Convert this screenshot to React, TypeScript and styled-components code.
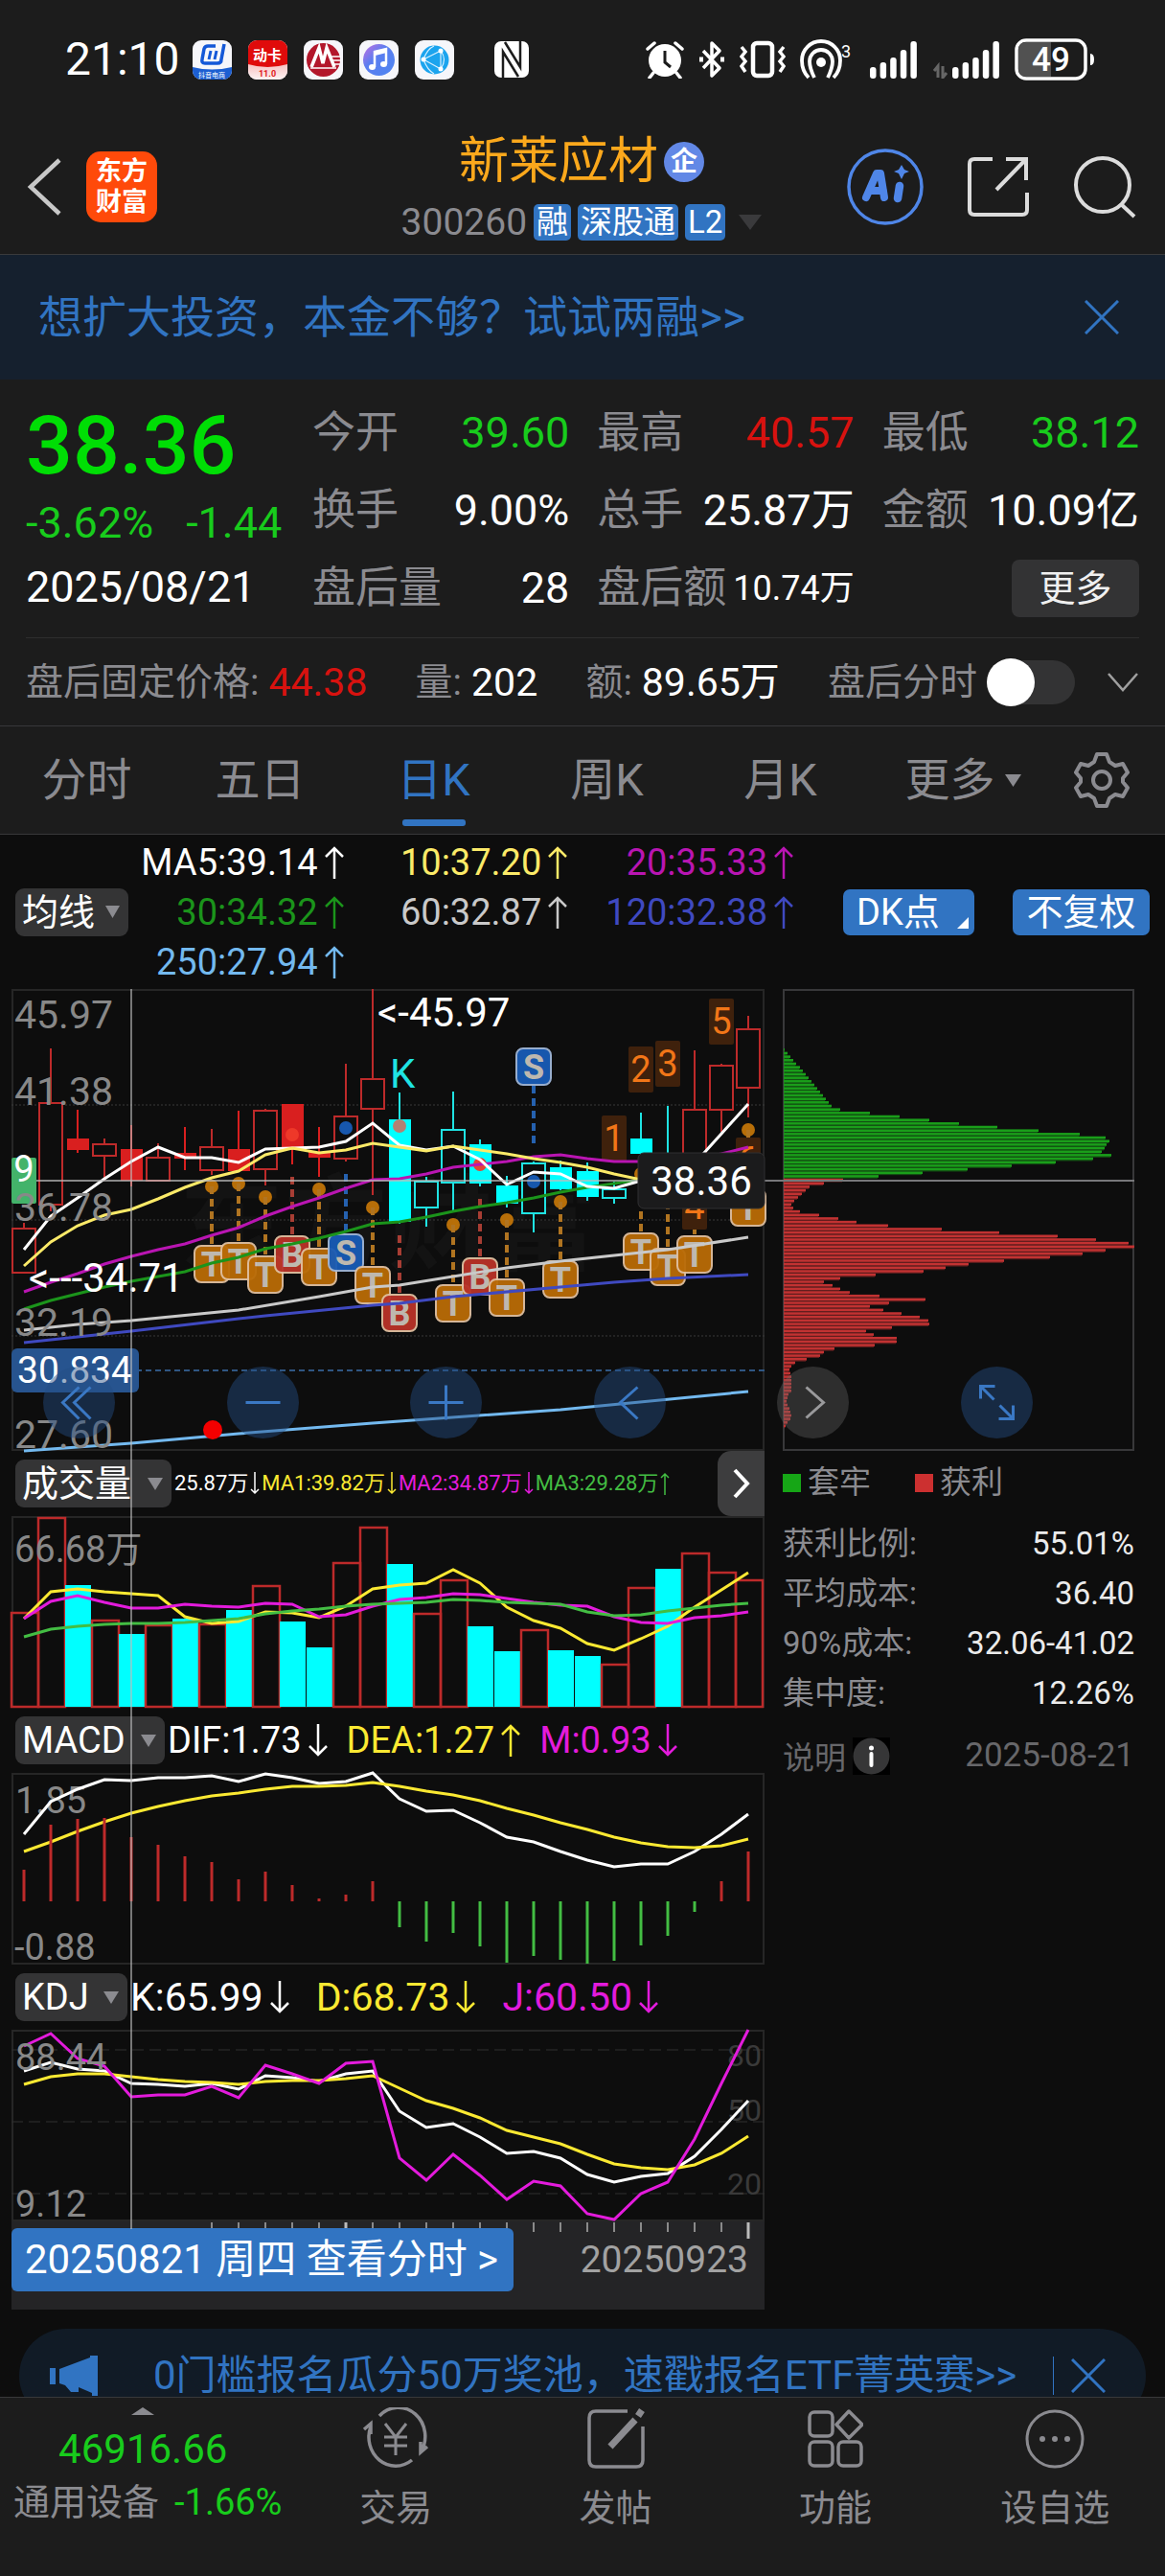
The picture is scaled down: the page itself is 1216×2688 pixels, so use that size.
import React from "react";
import styled, { createGlobalStyle, css } from "styled-components";

const c = {
  bar: "#1c1c1c",
  body: "#0d0d0d",
  line: "#2e2e2e",
  label: "#8b8b90",
  text: "#ffffff",
  up: "#d8120f",
  down: "#18cc1c",
  blue: "#3174c2",
  magenta: "#e31bdc",
  yellow: "#fbe932",
};

const GlobalStyle = createGlobalStyle`
  *, *::before, *::after { box-sizing: border-box; }
  body {
    margin: 0;
    background: ${c.body};
    color: ${c.text};
    font-family: Roboto, "Liberation Sans", "Noto Sans CJK SC", sans-serif;
  }
  button, select, input { font-family: inherit; }
  svg { display: block; flex-shrink: 0; }
`;

const plainButton = css`
  appearance: none;
  border: 0;
  padding: 0;
  margin: 0;
  background: none;
  color: inherit;
  cursor: pointer;
`;

const Page = styled.div`
  display: flex;
  flex-direction: column;
  min-width: 1100px;
`;

/* ---------- status bar ---------- */

const StatusBar = styled.div`
  display: flex;
  align-items: center;
  justify-content: space-between;
  height: 124px;
  padding: 0 72px 0 68px;
  background: ${c.bar};
`;
const StatusGroup = styled.div<{ $gap: number }>`
  display: flex;
  align-items: center;
  gap: ${(p) => p.$gap}px;
`;
const StatusSpacer = styled.span`
  width: 8px;
`;
const Clock = styled.time`
  font-size: 48px;
  line-height: 56px;
  width: 116px;
  white-space: nowrap;
`;

/* ---------- header ---------- */

const Header = styled.header`
  display: grid;
  grid-template-columns: 1fr auto 1fr;
  align-items: center;
  height: 142px;
  padding: 0 30px 0 28px;
  background: ${c.bar};
  border-bottom: 1px solid #3a3a3c;
`;
const HeaderLeft = styled.div`
  display: flex;
  align-items: center;
  gap: 26px;
`;
const HeaderRight = styled.div`
  display: flex;
  align-items: center;
  justify-content: flex-end;
  gap: 46px;
`;
const IconButton = styled.button`
  ${plainButton}
  display: block;
`;
const Brand = styled.div`
  display: grid;
  place-content: center;
  width: 74px;
  height: 74px;
  border-radius: 15px;
  background: #ff4a0a;
  font-size: 27px;
  line-height: 32px;
  font-weight: 700;
  text-align: center;
`;
const TitleBlock = styled.div`
  display: flex;
  flex-direction: column;
  align-items: center;
  gap: 14px;
`;
const TitleRow = styled.div`
  display: flex;
  align-items: center;
  gap: 6px;
`;
const StockName = styled.h1`
  margin: 0;
  font-size: 52px;
  line-height: 60px;
  font-weight: 400;
  color: #fba81c;
`;
const CompanyDot = styled.span`
  display: grid;
  place-content: center;
  width: 42px;
  height: 42px;
  border-radius: 50%;
  background: #6288e6;
  font-size: 28px;
  line-height: 32px;
  font-weight: 700;
`;
const CodeRow = styled.div`
  display: flex;
  align-items: center;
  gap: 7px;
`;
const Code = styled.span`
  font-size: 39px;
  line-height: 38px;
  color: ${c.label};
`;
const Tag = styled.span`
  padding: 0 3px;
  border-radius: 5px;
  background: ${c.blue};
  font-size: 33px;
  line-height: 38px;
`;

/* ---------- promo strip ---------- */

const Promo = styled.div`
  display: flex;
  align-items: center;
  justify-content: space-between;
  height: 130px;
  padding: 0 48px 0 40px;
  background: #15202e;
`;
const PromoLink = styled.a`
  color: ${c.blue};
  font-size: 46px;
  line-height: 60px;
  text-decoration: none;
`;

/* ---------- quote ---------- */

const Quote = styled.section`
  display: grid;
  grid-template-columns: 270px repeat(3, minmax(0, 1fr));
  column-gap: 29px;
  margin: 0;
  padding: 13px 27px 11px;
  background: ${c.bar};
`;
const QuoteMain = styled.div`
  display: grid;
  grid-template-rows: 112px 50px 83px;
  align-items: center;
  white-space: nowrap;
`;
const Price = styled.div`
  font-size: 86px;
  line-height: 100px;
  font-weight: 500;
  color: #00de05;
`;
const Change = styled.div`
  display: flex;
  gap: 34px;
  font-size: 45px;
  line-height: 50px;
  color: ${c.down};
`;
const TradeDate = styled.div`
  font-size: 45px;
  line-height: 54px;
`;
const QuoteColumn = styled.dl`
  display: grid;
  grid-template-rows: repeat(3, 81px);
  margin: 0;
  padding-top: 2px;
`;
const QuoteItem = styled.div`
  display: flex;
  align-items: center;
  justify-content: space-between;
  white-space: nowrap;
`;
const QuoteLabel = styled.dt`
  font-size: 45px;
  line-height: 54px;
  color: ${c.label};
`;
const QuoteValue = styled.dd<{ $tone?: string; $small?: boolean }>`
  margin: 0;
  font-size: ${(p) => (p.$small ? 36 : 45)}px;
  line-height: 54px;
  color: ${(p) => p.$tone ?? c.text};
`;
const MoreButton = styled.button`
  ${plainButton}
  justify-self: end;
  align-self: center;
  width: 133px;
  height: 60px;
  border-radius: 8px;
  background: #333334;
  font-size: 38px;
  line-height: 54px;
  color: #f0f0f0;
`;

const AfterHoursWrap = styled.section`
  background: ${c.bar};
  padding: 0 27px;
  border-bottom: 1px solid #38383a;
`;
const AfterHours = styled.div`
  display: flex;
  align-items: center;
  justify-content: space-between;
  height: 92px;
  border-top: 1px solid ${c.line};
  white-space: nowrap;
`;
const Pair = styled.span`
  display: flex;
  align-items: center;
  gap: 10px;
  font-size: 39px;
  line-height: 48px;
  color: ${c.label};
`;
const PairValue = styled.span<{ $tone?: string }>`
  font-size: 41px;
  color: ${(p) => p.$tone ?? c.text};
`;
const SwitchGroup = styled.div`
  display: flex;
  align-items: center;
  gap: 33px;
`;
const SwitchLabel = styled.label`
  display: flex;
  align-items: center;
  gap: 10px;
  font-size: 39px;
  line-height: 48px;
  color: ${c.label};
`;
const Switch = styled.input`
  appearance: none;
  position: relative;
  width: 92px;
  height: 46px;
  margin: 0;
  border-radius: 23px;
  background: #333334;
  &::before {
    content: "";
    position: absolute;
    left: 0;
    top: -2px;
    width: 50px;
    height: 50px;
    border-radius: 50%;
    background: #fff;
  }
  &:checked::before { left: 42px; }
`;

/* ---------- period tabs ---------- */

const Tabs = styled.nav`
  display: grid;
  grid-template-columns: repeat(5, 181fr) 200fr 111fr;
  height: 113px;
  background: ${c.bar};
  border-bottom: 1px solid #38383a;
`;
const Tab = styled.button<{ $active?: boolean }>`
  ${plainButton}
  position: relative;
  display: flex;
  align-items: center;
  justify-content: center;
  gap: 10px;
  font-size: 47px;
  line-height: 60px;
  color: ${(p) => (p.$active ? c.blue : c.label)};
  &::after {
    content: "";
    display: ${(p) => (p.$active ? "block" : "none")};
    position: absolute;
    bottom: 8px;
    left: calc(50% - 33px);
    width: 66px;
    height: 7px;
    border-radius: 3px;
    background: ${c.blue};
  }
`;
const SettingsButton = styled.button`
  ${plainButton}
  display: grid;
  place-content: center;
  padding-right: 22px;
`;

/* ---------- moving averages ---------- */

const AverageBar = styled.section`
  display: flex;
  align-items: center;
  height: 161px;
  padding: 0 16px;
`;
const AverageGrid = styled.div`
  display: grid;
  flex: 1;
  grid-template-columns: 225fr 234fr 236fr;
  grid-auto-rows: 52px;
  align-items: center;
`;
const Reading = styled.span<{ $tone: string; $size: number }>`
  display: flex;
  align-items: center;
  justify-content: flex-end;
  gap: ${(p) => (p.$size < 30 ? 2 : 7)}px;
  font-size: ${(p) => p.$size}px;
  line-height: 48px;
  color: ${(p) => p.$tone};
  white-space: nowrap;
`;
const BlueButton = styled.button<{ $wide?: boolean }>`
  ${plainButton}
  display: flex;
  align-items: center;
  justify-content: ${(p) => (p.$wide ? "center" : "space-between")};
  width: ${(p) => (p.$wide ? 143 : 137)}px;
  height: 48px;
  padding: 0 ${(p) => (p.$wide ? 0 : 6)}px 0 ${(p) => (p.$wide ? 0 : 14)}px;
  margin-left: ${(p) => (p.$wide ? 40 : 52)}px;
  border-radius: 7px;
  background: ${c.blue};
  font-size: 38px;
  line-height: 46px;
  white-space: nowrap;
`;
const Corner = styled.span`
  align-self: flex-end;
  margin-bottom: 7px;
  border-left: 12px solid transparent;
  border-bottom: 12px solid #fff;
`;

const Picker = styled.label`
  display: inline-grid;
  align-items: center;
  height: 50px;
  border-radius: 9px;
  background: #343435;
  > * { grid-area: 1 / 1; }
  > svg { justify-self: end; margin-right: 9px; pointer-events: none; }
`;
const PickerSelect = styled.select<{ $room: number }>`
  appearance: none;
  border: 0;
  margin: 0;
  height: 50px;
  padding: 0 ${(p) => p.$room}px 0 7px;
  background: none;
  color: #fff;
  font-size: 38px;
  line-height: 50px;
`;

/* ---------- charts ---------- */

const Board = styled.main`
  position: relative;
  display: grid;
  grid-template-columns: minmax(0, 786fr) minmax(0, 367fr);
  column-gap: 19px;
  padding: 0 32px 0 12px;
`;
const ChartColumn = styled.div`
  position: relative;
`;
const ChartSvg = styled.svg`
  width: 100%;
  height: auto;
  overflow: visible;
`;
const Crosshair = styled.div`
  position: absolute;
  top: 0;
  bottom: 84px;
  left: calc(100% * 124 / 786);
  width: 2px;
  background: rgba(190, 190, 190, 0.6);
  pointer-events: none;
`;
const IndicatorBar = styled.div`
  display: flex;
  align-items: center;
  height: 68px;
  padding-left: 4px;
`;
const IndicatorReadings = styled.div<{ $gap: number }>`
  display: flex;
  flex: 1;
  gap: ${(p) => p.$gap}px;
  padding-left: 3px;
`;
const NextButton = styled.button`
  ${plainButton}
  display: grid;
  place-content: center;
  align-self: stretch;
  width: 49px;
  border-radius: 14px 0 0 14px;
  background: #3d3d3e;
`;
const DateStrip = styled.div`
  display: flex;
  justify-content: space-between;
  height: 92px;
  padding-right: 17px;
  background: #242426;
`;
const DayButton = styled.button`
  ${plainButton}
  position: relative;
  height: 66px;
  margin-top: 7px;
  padding: 0 16px 0 14px;
  border-radius: 6px;
  background: ${c.blue};
  font-size: 42px;
  line-height: 66px;
  white-space: pre;
`;
const EndDate = styled.span`
  margin-top: 16px;
  font-size: 39px;
  line-height: 48px;
  color: #a2a2a2;
`;
const Controls = styled.div`
  position: absolute;
  top: 394px;
  left: 45px;
  right: 138px;
  display: flex;
  justify-content: space-between;
`;
const RoundButton = styled.button<{ $gray?: boolean }>`
  ${plainButton}
  width: 75px;
  height: 75px;
  border-radius: 50%;
  background: ${(p) => (p.$gray ? "rgba(110, 110, 110, 0.35)" : "rgba(36, 78, 132, 0.45)")};
`;

/* ---------- cost distribution ---------- */

const SideColumn = styled.aside``;
const Legend = styled.div`
  display: flex;
  gap: 46px;
  padding-top: 10px;
`;
const LegendItem = styled.span<{ $tone: string }>`
  display: flex;
  align-items: center;
  gap: 7px;
  font-size: 33px;
  line-height: 46px;
  color: ${c.label};
  &::before {
    content: "";
    width: 19px;
    height: 19px;
    background: ${(p) => p.$tone};
  }
`;
const CostTable = styled.table`
  width: 100%;
  margin-top: 15px;
  border-collapse: collapse;
  font-size: 33px;
  line-height: 52px;
  white-space: nowrap;
`;
const CostLabel = styled.th`
  padding: 0;
  font-weight: 400;
  text-align: left;
  color: ${c.label};
`;
const CostValue = styled.td`
  padding: 0;
  text-align: right;
  color: #ebebeb;
`;
const Note = styled.div`
  display: flex;
  align-items: center;
  margin-top: 15px;
  font-size: 35px;
  line-height: 40px;
  color: #67676a;
`;
const NoteButton = styled.button`
  ${plainButton}
  display: flex;
  align-items: center;
  gap: 7px;
  margin-right: auto;
  font-size: 33px;
`;

/* ---------- bottom ---------- */

const TickerWrap = styled.div`
  height: 91px;
  padding: 20px 20px 0;
  overflow: hidden;
`;
const Ticker = styled.div`
  display: flex;
  align-items: center;
  height: 98px;
  padding: 0 42px 0 32px;
  border-radius: 49px;
  background: #111b26;
`;
const TickerLink = styled.a`
  flex: 1;
  padding-left: 58px;
  font-size: 42px;
  line-height: 42px;
  color: ${c.blue};
  text-decoration: none;
  white-space: nowrap;
`;
const TickerDivider = styled.span`
  width: 1px;
  height: 40px;
  margin-right: 18px;
  background: ${c.blue};
`;
const Footer = styled.nav`
  display: grid;
  grid-template-columns: 298fr repeat(4, 229fr);
  height: 187px;
  background: ${c.bar};
  border-top: 1px solid #38383a;
`;
const IndexButton = styled.button`
  ${plainButton}
  display: flex;
  flex-direction: column;
  align-items: center;
  padding-top: 10px;
  white-space: nowrap;
`;
const IndexValue = styled.span`
  margin-top: 10px;
  font-size: 42px;
  line-height: 52px;
  color: ${c.down};
`;
const IndexName = styled.span`
  display: flex;
  gap: 16px;
  margin-top: 4px;
  padding-left: 10px;
  font-size: 38px;
  line-height: 50px;
  color: ${c.label};
`;
const IndexChange = styled.span`
  color: ${c.down};
`;
const FooterButton = styled.button`
  ${plainButton}
  display: flex;
  flex-direction: column;
  align-items: center;
  gap: 16px;
  padding-top: 10px;
  font-size: 38px;
  line-height: 50px;
  color: ${c.label};
`;

/* ---------- icons ---------- */

const Triangle = ({ w = 16, h = 14, fill = c.label, up = false }: { w?: number; h?: number; fill?: string; up?: boolean }) => (
  <svg width={w} height={h} viewBox="0 0 10 10" preserveAspectRatio="none" fill={fill}>
    <path d={up ? "M0 10H10L5 0Z" : "M0 0H10L5 10Z"} />
  </svg>
);

const TrendArrow = ({ up, small }: { up: boolean; small: boolean }) => {
  const w = small ? 10 : 20;
  const h = small ? 24 : 34;
  const m = w / 2;
  const d = up
    ? `M${m} ${h}V2M1 ${m + 1}L${m} 2L${w - 1} ${m + 1}`
    : `M${m} 0V${h - 2}M1 ${h - m - 1}L${m} ${h - 2}L${w - 1} ${h - m - 1}`;
  return (
    <svg width={w} height={h} viewBox={`0 0 ${w} ${h}`} fill="none" stroke="currentColor" strokeWidth={small ? 1.5 : 2.5} role="img" aria-label={up ? "升" : "降"}>
      <path d={d} />
    </svg>
  );
};

const Close = () => (
  <svg width="36" height="36" viewBox="0 0 36 36" stroke={c.blue} strokeWidth="3">
    <path d="M1 1L35 35M35 1L1 35" />
  </svg>
);

const AppIcon = ({ kind }: { kind: number }) => (
  <svg width="41" height="41" viewBox="0 0 41 41">
    <defs>
      <linearGradient id="musicDisc" x1="0" y1="0" x2="1" y2="1">
        <stop offset="0" stopColor="#c86fe0" />
        <stop offset=".4" stopColor="#5b7df0" />
        <stop offset="1" stopColor="#4e86f0" />
      </linearGradient>
      <linearGradient id="cardBase" x1="0" y1="0" x2="0" y2="1">
        <stop offset="0" stopColor="#f6b8b8" />
        <stop offset="1" stopColor="#fdf3f3" />
      </linearGradient>
      <clipPath id="appShape"><rect width="41" height="41" rx="9" /></clipPath>
    </defs>
    <g clipPath="url(#appShape)">
      <rect width="41" height="41" fill="#f6f6fa" />
      {kind === 0 && (
        <>
          <path d="M0 28Q20 33 41 28V41H0Z" fill="#1c5fd2" />
          <path d="M24 6H16Q13 6 12 9L10 20Q9 24 13 24H26Q30 24 30 20L33 4" fill="none" stroke="#1458d8" strokeWidth="3.500" />
          <path d="M17 20L19 11M23 20L25 11" stroke="#1458d8" strokeWidth="3" />
          <text x="20" y="39" fontSize="7" fill="#fff" textAnchor="middle">抖音电商</text>
        </>
      )}
      {kind === 1 && (
        <>
          <rect y="22" width="41" height="19" fill="url(#cardBase)" />
          <path d="M0 0H41V25Q20 31 0 25Z" fill="#e00b0b" />
          <text x="20" y="21" fontSize="15" fontWeight="700" fill="#fff" textAnchor="middle">动卡</text>
          <text x="20" y="38" fontSize="9" fontWeight="700" fill="#e02020" textAnchor="middle">11.0</text>
        </>
      )}
      {kind === 2 && (
        <>
          <circle cx="20.500" cy="20.500" r="17.500" fill="#b3172b" />
          <path d="M8 28L16 8L20 24L24 8L32 28" fill="none" stroke="#fff" strokeWidth="3.500" />
          <path d="M7 29H34M28 17H39M30 21H39M31 25H38" stroke="#fff" strokeWidth="1.500" />
        </>
      )}
      {kind === 3 && (
        <>
          <circle cx="20.500" cy="20.500" r="16.500" fill="url(#musicDisc)" />
          <path d="M16 28V12L28 9V25" fill="none" stroke="#fff" strokeWidth="2.500" />
          <path d="M16 14L28 11" stroke="#fff" strokeWidth="4" />
          <ellipse cx="13.500" cy="28" rx="3.500" ry="3" fill="#fff" />
          <ellipse cx="25.500" cy="25" rx="3.500" ry="3" fill="#fff" />
        </>
      )}
      {kind === 4 && (
        <>
          <circle cx="20.500" cy="20.500" r="15" fill="#1ba4ee" />
          <path d="M9 20L27 11V30L9 20M27 11Q34 20 27 30M9 20Q13 9 20 6M9 20Q13 31 20 35" fill="none" stroke="#d5efff" strokeWidth="1.200" />
          <circle cx="9" cy="20" r="2.500" fill="#fff" />
          <circle cx="27" cy="11" r="2.500" fill="#fff" />
          <circle cx="27" cy="30" r="2.500" fill="#fff" />
        </>
      )}
    </g>
  </svg>
);

const Nfc = () => (
  <svg width="36" height="38" viewBox="0 0 36 38">
    <rect width="36" height="38" rx="7" fill="#fff" />
    <path d="M9 38V11L25 37M27 0V27L11 1" fill="none" stroke="#1c1c1c" strokeWidth="2.500" />
  </svg>
);

const Alarm = () => (
  <svg width="40" height="40" viewBox="0 0 40 40">
    <circle cx="20" cy="21" r="17" fill="#fff" />
    <path d="M2 9L9 3M38 9L31 3M8 34L4 39M32 34L36 39" stroke="#fff" strokeWidth="3.500" strokeLinecap="round" />
    <path d="M20 11V23L26 28" stroke="#1c1c1c" strokeWidth="3" fill="none" />
  </svg>
);

const Bluetooth = () => (
  <svg width="28" height="40" viewBox="0 0 28 40" fill="none" stroke="#fff" strokeWidth="3.500" strokeLinejoin="round">
    <path d="M5 11L22 29L14 37V3L22 11L5 29" />
    <path d="M1 20H5M23 20H27" strokeWidth="5" />
  </svg>
);

const Vibrate = () => (
  <svg width="48" height="40" viewBox="0 0 48 40" fill="none" stroke="#fff" strokeWidth="4.500">
    <rect x="14" y="3" width="20" height="34" rx="4" />
    <path d="M2 7L6 12L2 17L6 22L2 27L6 33M46 7L42 12L46 17L42 22L46 27L42 33" strokeWidth="3.500" />
  </svg>
);

const Hotspot = () => (
  <svg width="58" height="42" viewBox="0 0 58 42" fill="none" stroke="#fff" strokeWidth="3.800">
    <path d="M9 40Q2 33 2 22A20 20 0 0 1 42 22Q42 33 35 40" />
    <path d="M15 40Q10 30 10 23A12 12 0 0 1 34 23Q34 30 29 40" />
    <circle cx="22" cy="24" r="5" fill="#fff" stroke="none" />
    <text x="43" y="19" fontSize="18" fill="#fff" stroke="none">3</text>
  </svg>
);

const Signal = ({ data = false }: { data?: boolean }) => (
  <svg width={data ? 71 : 50} height="40" viewBox={data ? "-21 0 71 40" : "0 0 50 40"} fill="#fff">
    {[12, 17, 22, 30, 39].map((h, i) => (
      <rect key={h} x={i * 10.6} y={40 - h} width="6.500" height={h} rx="3" />
    ))}
    {data && <path d="M-19 32L-15 27V39M-10 27V39L-6 34" stroke="#666" strokeWidth="3" fill="none" />}
  </svg>
);

const Battery = () => (
  <svg width="85" height="44" viewBox="0 0 85 44">
    <rect x="2" y="2" width="72" height="40" rx="10" fill="#1c1c1c" stroke="#fff" strokeWidth="3.500" />
    <path d="M38 4H12Q4 4 4 12V32Q4 40 12 40H38Z" fill="#515151" />
    <path d="M79 16Q83 16 83 22Q83 28 79 28Z" fill="#fff" />
    <text x="38" y="34" fontSize="35" fontWeight="500" fill="#fff" textAnchor="middle">49</text>
  </svg>
);

const Gear = () => (
  <svg width="58" height="58" viewBox="0 0 58 58" fill="none" stroke={c.label} strokeWidth="4" strokeLinejoin="round">
    <path d="M24 2H34L37 10L43 14L51 12L56 21L51 27V31L56 37L51 46L43 44L37 48L34 56H24L21 48L15 44L7 46L2 37L7 31V27L2 21L7 12L15 14L21 10Z" />
    <circle cx="29" cy="29" r="9" />
  </svg>
);

/* ---------- chart data ---------- */

const STEP = 28;
const cx = (i: number) => 13 + i * STEP;
const toPath = (ys: number[]) => ys.map((y, i) => `${i ? "L" : "M"}${cx(i)} ${y}`).join("");
const toSparse = (pts: number[][]) => pts.map(([i, y], n) => `${n ? "L" : "M"}${cx(i)} ${y}`).join("");

type Candle = [top: number, bottom: number, high: number, low: number, kind: "r" | "R" | "c" | "C"];
const candles: Candle[] = [
  [249, 296, 244, 296, "r"], [118, 225, 62, 232, "r"], [156, 168, 126, 171, "R"], [161, 174, 156, 200, "r"],
  [167, 200, 142, 206, "R"], [175, 200, 161, 200, "r"], [171, 177, 144, 189, "R"], [164, 189, 146, 194, "r"],
  [167, 190, 127, 190, "R"], [126, 188, 125, 205, "r"], [120, 165, 120, 183, "R"], [170, 176, 144, 196, "R"],
  [132, 177, 78, 180, "r"], [93, 125, 0, 215, "r"], [136, 243, 108, 245, "C"], [200, 228, 196, 248, "c"],
  [146, 202, 107, 231, "c"], [162, 203, 157, 206, "C"], [205, 224, 195, 228, "C"], [181, 234, 180, 254, "c"],
  [186, 209, 179, 210, "C"], [190, 217, 181, 221, "C"], [208, 218, 201, 224, "c"], [156, 172, 129, 188, "C"],
  [190, 205, 122, 215, "C"], [125, 200, 64, 205, "r"], [79, 126, 78, 149, "r"], [41, 103, 28, 134, "r"],
];
const ma5 = [272, 237, 218, 198, 180, 165, 176, 176, 181, 167, 166, 165, 159, 140, 163, 168, 164, 178, 204, 191, 193, 206, 208, 200, 196, 182, 151, 120];
const ma10 = [289, 264, 247, 236, 230, 219, 207, 197, 190, 173, 166, 171, 168, 161, 165, 169, 164, 168, 172, 177, 181, 186, 193, 199, 198, 196, 192, 186];
const ma20 = [316, 306, 297, 287, 279, 272, 266, 257, 249, 237, 227, 218, 208, 199, 198, 193, 186, 183, 180, 175, 173, 177, 180, 180, 180, 178, 172, 165];
const ma30 = [334, 325, 318, 311, 305, 300, 295, 286, 280, 271, 266, 260, 253, 245, 243, 238, 232, 227, 223, 218, 212, 207, 203, 199, 196, 192, 186, 180];
const ma60 = [[0, 356], [2, 350], [4, 346], [8, 335], [11, 321], [13, 311], [14, 309], [18, 291], [20, 284], [24, 272], [27, 259]];
const ma120 = [[0, 369], [4, 357], [8, 344], [9, 341], [13, 330], [14, 328], [16, 321], [20, 311], [22, 306], [24, 302], [27, 298]];
const ma250 = [[0, 482], [4, 474], [8, 464], [13, 453], [14, 451], [20, 439], [27, 420]];

type Trade = { i: number; kind: "T" | "B" | "S"; y: number; dot?: number; from: number; to: number };
const trades: Trade[] = [
  { i: 7, kind: "T", y: 287, dot: 206, from: 206, to: 268 },
  { i: 8, kind: "T", y: 284, dot: 203, from: 203, to: 265 },
  { i: 9, kind: "T", y: 298, dot: 217, from: 217, to: 279 },
  { i: 10, kind: "B", y: 277, dot: 152, from: 196, to: 258 },
  { i: 11, kind: "T", y: 290, dot: 209, from: 209, to: 271 },
  { i: 12, kind: "S", y: 275, dot: 145, from: 193, to: 256 },
  { i: 13, kind: "T", y: 309, dot: 228, from: 228, to: 290 },
  { i: 14, kind: "B", y: 338, dot: 143, from: 257, to: 319 },
  { i: 16, kind: "T", y: 328, dot: 246, from: 246, to: 309 },
  { i: 17, kind: "B", y: 300, dot: 183, from: 219, to: 281 },
  { i: 18, kind: "T", y: 322, dot: 241, from: 241, to: 303 },
  { i: 19, kind: "S", y: 81, dot: 201, from: 101, to: 163 },
  { i: 20, kind: "T", y: 303, dot: 222, from: 222, to: 284 },
  { i: 23, kind: "T", y: 274, dot: 193, from: 193, to: 255 },
  { i: 24, kind: "T", y: 290, from: 209, to: 271 },
  { i: 25, kind: "T", y: 277, from: 196, to: 258 },
  { i: 27, kind: "T", y: 228, dot: 147, from: 147, to: 209 },
];
const tradeFill = { T: "#b96b06", B: "#b93228", S: "#185bb6" };
const tradeDash = { T: "#b97a22", B: "#b04036", S: "#2766b8" };
const counts = [[616, 132, 1], [644, 60, 2], [672, 54, 3], [700, 203, 4], [728, 10, 5], [756, 155, 6]];

const CandleChart = () => (
  <ChartSvg viewBox="0 0 786 482">
    <text x="175" y="285" fontSize="109" fontWeight="700" fill="#131313">东方财富</text>
    <rect x="1" y="1" width="784" height="480" fill="none" stroke="#262626" strokeWidth="2" />
    <path d="M0 121H786M0 241H786M0 362H786" stroke="#3a3a3a" strokeDasharray="2 2" />
    {candles.map(([top, bottom, high, low, kind], i) => {
      const red = kind === "r" || kind === "R";
      const solid = kind === "R" || kind === "C";
      const line = red ? (solid ? "#d91f1f" : "#bd2a2a") : "#1fe3e3";
      return (
        <g key={i} stroke={line} strokeWidth="2">
          <path d={`M${cx(i)} ${high}V${top}M${cx(i)} ${bottom}V${low}`} />
          {solid ? (
            <rect x={cx(i) - 11} y={top} width="23" height={bottom - top} fill={red ? "#d91f1f" : "#00ffff"} stroke="none" />
          ) : (
            <rect x={cx(i) - 12} y={top + 1} width="24" height={bottom - top - 1} fill={c.body} />
          )}
        </g>
      );
    })}
    {trades.map((t) => (
      <g key={t.i} opacity=".95">
        {t.dot && <circle cx={cx(t.i)} cy={t.dot} r="7" fill={t.kind === "T" ? "#c17408" : t.kind === "S" ? "#185bb6" : t.i === 14 ? "#bd7a6b" : "#f03a2a"} />}
        <path d={`M${cx(t.i)} ${t.from}V${t.to}`} stroke={tradeDash[t.kind]} strokeWidth="4" strokeDasharray="8 5" />
        <rect x={cx(t.i) - 18} y={t.y - 19} width="36" height="38" rx="7" fill={tradeFill[t.kind]} stroke={t.kind === "S" ? "#9fb6d8" : "#e0c0a0"} strokeWidth="2" />
        <text x={cx(t.i)} y={t.y + 13} fontSize="36" fontWeight="700" fill="#c8c2b8" textAnchor="middle">{t.kind}</text>
      </g>
    ))}
    {counts.map(([x, y, n]) => (
      <g key={n}>
        <rect x={x} y={y} width="26" height="48" rx="2" fill="#3f210c" />
        <text x={x + 13} y={y + 37} fontSize="38" fill="#f27618" textAnchor="middle">{n}</text>
      </g>
    ))}
    <g fill="none" strokeWidth="3">
      <path d={toSparse(ma250)} stroke="#73b9ef" />
      <path d={toSparse(ma120)} stroke="#3f49c0" />
      <path d={toSparse(ma60)} stroke="#c9c9c9" />
      <path d={toPath(ma30)} stroke="#1b941b" />
      <path d={toPath(ma20)} stroke="#b915b2" />
      <path d={toPath(ma5)} stroke="#ffffff" />
      <path d={toPath(ma10)} stroke="#fbea68" />
    </g>
    <path d="M0 200H786" stroke="rgba(190,190,190,.7)" strokeWidth="2" />
    <rect x="0" y="176" width="26" height="48" rx="2" fill="#43b36a" />
    <text x="13" y="201" fontSize="38" fill="#fff" textAnchor="middle">9</text>
    <g fontSize="41" fill="#888">
      <text x="3" y="41">45.97</text>
      <text x="3" y="121">41.38</text>
      <text x="3" y="242">36.78</text>
      <text x="3" y="362">32.19</text>
      <text x="3" y="479">27.60</text>
    </g>
    <g fontSize="42" fill="#fff">
      <text x="382" y="39">&lt;-45.97</text>
      <text x="18" y="316">&lt;---34.71</text>
      <text x="395" y="103" fill="#1fe3e3">K</text>
    </g>
    <path d="M0 398H786" stroke="#2f5683" strokeWidth="2" strokeDasharray="6 4" />
    <rect x="0" y="375" width="133" height="46" rx="6" fill="#27548f" />
    <text x="66" y="411" fontSize="39" fill="#fff" textAnchor="middle">30.834</text>
    <circle cx="210" cy="460" r="10" fill="#f40000" />
    <rect x="654" y="171" width="132" height="58" rx="6" fill="#1b1b1c" stroke="#303032" strokeWidth="1" />
    <text x="720" y="215" fontSize="42" fill="#fff" textAnchor="middle">38.36</text>
  </ChartSvg>
);

const volumeTops = [100, 1, 72, 108, 123, 113, 107, 112, 98, 72, 110, 137, 48, 11, 50, 101, 66, 115, 141, 118, 140, 146, 154, 74, 55, 38, 58, 66];
const volumeDown = new Set([2, 4, 6, 8, 10, 11, 14, 17, 18, 20, 21, 24]);
const volumeMa1 = [107, 79, 76, 79, 81, 83, 105, 112, 110, 100, 101, 106, 94, 76, 72, 70, 56, 70, 95, 109, 117, 133, 140, 128, 115, 95, 77, 59];
const volumeMa2 = [107, 89, 83, 90, 96, 96, 92, 94, 95, 91, 92, 105, 103, 94, 87, 85, 81, 82, 86, 90, 93, 94, 105, 111, 112, 106, 104, 100];
const volumeMa3 = [126, 118, 115, 113, 112, 112, 111, 109, 107, 102, 99, 97, 94, 92, 91, 90, 87, 88, 90, 91, 92, 100, 104, 103, 99, 96, 93, 91];

const VolumeChart = () => (
  <ChartSvg viewBox="0 0 786 200">
    <rect x="1" y="1" width="784" height="198" fill="none" stroke="#262626" strokeWidth="2" />
    {volumeTops.map((top, i) =>
      volumeDown.has(i) ? (
        <rect key={i} x={i * STEP} y={top} width="27" height={199 - top} fill="#00ffff" />
      ) : (
        <rect key={i} x={i * STEP} y={top + 1} width="28" height={198 - top} fill="none" stroke="#bd2a2a" strokeWidth="2.500" />
      ),
    )}
    <g fill="none" strokeWidth="3">
      <path d={toPath(volumeMa1)} stroke={c.yellow} />
      <path d={toPath(volumeMa2)} stroke={c.magenta} />
      <path d={toPath(volumeMa3)} stroke="#43bd43" />
    </g>
    <text x="3" y="48" fontSize="38" fill="#888">66.68万</text>
  </ChartSvg>
);

const dif = [64, 30, 17, 7, 8, 5, 5, 3, 9, 1, 5, 11, 9, 0, 27, 40, 39, 52, 67, 72, 82, 91, 98, 95, 95, 82, 64, 43];
const dea = [82, 72, 61, 51, 42, 35, 29, 24, 21, 17, 14, 14, 13, 10, 14, 19, 23, 29, 37, 44, 52, 59, 67, 73, 77, 78, 76, 69];
const macdEnds = [101, 54, 48, 47, 67, 75, 87, 93, 111, 103, 117, 131, 127, 113, 161, 176, 167, 181, 198, 191, 195, 199, 196, 180, 170, 145, 113, 82];

const MacdChart = () => (
  <ChartSvg viewBox="0 0 786 200">
    <rect x="1" y="1" width="784" height="198" fill="none" stroke="#262626" strokeWidth="2" />
    <g fontSize="38" fill="#888">
      <text x="4" y="42">1.85</text>
      <text x="3" y="195">-0.88</text>
    </g>
    <g fill="none" strokeWidth="3">
      <path d={toPath(dif)} stroke="#fff" />
      <path d={toPath(dea)} stroke={c.yellow} />
    </g>
    {macdEnds.map((y, i) => (
      <path key={i} d={`M${cx(i)} 134V${y}`} stroke={y < 134 ? "#bd2a2a" : "#43bd43"} strokeWidth="3" />
    ))}
  </ChartSvg>
);

const kLine = [43, 34, 41, 43, 56, 57, 59, 56, 62, 48, 50, 54, 46, 43, 85, 102, 98, 112, 129, 127, 134, 151, 159, 153, 150, 132, 104, 74];
const dLine = [57, 49, 46, 46, 49, 52, 54, 55, 57, 54, 53, 53, 51, 48, 61, 74, 82, 92, 105, 112, 119, 130, 140, 144, 146, 141, 129, 111];
const jLine = [17, 4, 30, 38, 70, 68, 68, 59, 71, 37, 46, 56, 35, 33, 134, 157, 130, 152, 177, 158, 163, 192, 198, 171, 159, 114, 56, 0];

const KdjChart = () => (
  <ChartSvg viewBox="0 0 786 200">
    <rect x="1" y="1" width="784" height="198" fill="none" stroke="#262626" strokeWidth="2" />
    <path d="M0 21H786M0 96H786M0 171H786" stroke="#303030" strokeWidth="1" strokeDasharray="12 6" />
    <g fontSize="32" fill="#3a3a3a" textAnchor="end">
      <text x="783" y="38">80</text>
      <text x="783" y="95">50</text>
      <text x="783" y="172">20</text>
    </g>
    <g fill="none" strokeWidth="3">
      <path d={toPath(kLine)} stroke="#fff" />
      <path d={toPath(dLine)} stroke={c.yellow} />
      <path d={toPath(jLine)} stroke={c.magenta} />
    </g>
    <g fontSize="38" fill="#888">
      <text x="4" y="42">88.44</text>
      <text x="4" y="195">9.12</text>
    </g>
    <path d={Array.from({ length: 21 }, (_, n) => `M${cx(n + 7)} 201v10`).join("")} stroke="#8a8a8a" strokeWidth="2" />
    <path d={`M${cx(12)} 201v10M${cx(27)} 201v17`} stroke="#bbb" strokeWidth="3" />
  </ChartSvg>
);

const trapped = [1, 4, 7, 10, 13, 17, 20, 23, 26, 29, 32, 35, 38, 41, 44, 47, 50, 59, 90, 121, 152, 183, 223, 266, 309, 336, 340, 337, 335, 332, 342, 323, 284, 238, 192, 145, 99];
const profit = [62, 42, 27, 23, 19, 15, 11, 8, 10, 17, 37, 57, 76, 109, 165, 225, 286, 326, 360, 366, 336, 312, 278, 230, 193, 169, 146, 96, 59, 42, 51, 59, 69, 100, 148, 110, 90, 104, 123, 142, 151, 152, 113, 86, 94, 118, 118, 95, 53, 42, 38, 24, 12, 8, 6, 7, 8, 8, 8, 8, 8, 5, 4, 3, 4, 6, 7, 8, 7, 4, 2];

const CostChart = () => (
  <ChartSvg viewBox="0 0 367 482">
    <rect x="1" y="1" width="365" height="480" fill="none" stroke="#38383a" strokeWidth="2" />
    {[...trapped, ...profit].map((w, i) => {
      const green = i < trapped.length;
      const y = 62 + i * 3.67;
      return (
        <g key={i} fill={green ? "#1a9e1a" : "#c23232"}>
          <rect x="1" y={y} width={w} height="2.600" />
          <rect x="1" y={y + 2.6} width={Math.max(w - 1, 0)} height="1.100" opacity=".45" />
        </g>
      );
    })}
    <path d="M-19 200H367" stroke="#77777a" strokeWidth="2" />
  </ChartSvg>
);

const controls: [string, string, boolean?][] = [
  ["快退", "M0 -16L-17 0L0 17M12 -16L-5 0L12 17"],
  ["缩小", "M-18 0H18"],
  ["放大", "M-18 0H18M0 -18V18"],
  ["左移", "M8 -16L-10 0L8 17"],
  ["右移", "M-7 -16L11 0L-7 16", true],
  ["全屏", "M-2 -17H-17V-4M-17 -17L-3 -3M3 3L17 17M2 17H17V3"],
];

const Pick = ({ name, room, tri = 15 }: { name: string; room: number; tri?: number }) => (
  <Picker>
    <PickerSelect $room={room} aria-label={name} defaultValue={name}>
      <option>{name}</option>
    </PickerSelect>
    <Triangle w={tri} h={13} />
  </Picker>
);

const Read = ({ text, up = false, tone, size = 38 }: { text: string; up?: boolean; tone: string; size?: number }) => (
  <Reading $tone={tone} $size={size}>
    <span>{text}</span>
    <TrendArrow up={up} small={size < 30} />
  </Reading>
);

const quoteColumns = [
  [["今开", "39.60", c.down], ["换手", "9.00%"], ["盘后量", "28"]],
  [["最高", "40.57", c.up], ["总手", "25.87万"], ["盘后额", "10.74万"]],
  [["最低", "38.12", c.down], ["金额", "10.09亿"]],
];

const averages = [
  ["MA5:39.14", "#ffffff"], ["10:37.20", "#fbea68"], ["20:35.33", "#b915b2"],
  ["30:34.32", "#1b941b"], ["60:32.87", "#c9c9c9"], ["120:32.38", "#3f49c0"],
  ["250:27.94", "#73b9ef"],
];

export default function App() {
  return (
    <Page>
      <GlobalStyle />
      <StatusBar>
        <StatusGroup $gap={17}>
          <Clock>21:10</Clock>
          {[0, 1, 2, 3, 4].map((k) => <AppIcon key={k} kind={k} />)}
          <StatusSpacer />
          <Nfc />
        </StatusGroup>
        <StatusGroup $gap={15}>
          <Alarm />
          <Bluetooth />
          <Vibrate />
          <Hotspot />
          <Signal />
          <Signal data />
          <Battery />
        </StatusGroup>
      </StatusBar>

      <Header>
        <HeaderLeft>
          <IconButton aria-label="返回">
            <svg width="36" height="60" viewBox="0 0 36 60" fill="none" stroke="#c8c8c8" strokeWidth="4.500">
              <path d="M34 2L4 30L34 58" />
            </svg>
          </IconButton>
          <Brand>东方<br />财富</Brand>
        </HeaderLeft>
        <TitleBlock>
          <TitleRow>
            <StockName>新莱应材</StockName>
            <CompanyDot>企</CompanyDot>
          </TitleRow>
          <CodeRow>
            <Code>300260</Code>
            <Tag>融</Tag>
            <Tag>深股通</Tag>
            <Tag>L2</Tag>
            <span />
            <Triangle w={24} h={16} fill="#3a3a3c" />
          </CodeRow>
        </TitleBlock>
        <HeaderRight>
          <IconButton aria-label="AI">
            <svg width="80" height="80" viewBox="0 0 80 80" fill="none" stroke="#4f86e8" strokeLinejoin="round" strokeLinecap="round">
              <circle cx="40" cy="40" r="38" strokeWidth="3.500" />
              <path d="M20 51L31 26H35L39 51M24 44H38" strokeWidth="8" />
              <path d="M55 39L53 52" strokeWidth="8.500" />
              <path d="M57 17L60 22L65 24L60 26L57 32L54 26L49 24L54 22Z" fill="#4f86e8" stroke="none" />
            </svg>
          </IconButton>
          <IconButton aria-label="分享">
            <svg width="64" height="64" viewBox="0 0 64 64" fill="none" stroke="#dcdcdc" strokeWidth="4">
              <path d="M26 3H7Q2 3 2 8V56Q2 61 7 61H57Q62 61 62 56V38M40 3H61V25M61 3L30 35" />
            </svg>
          </IconButton>
          <IconButton aria-label="搜索">
            <svg width="66" height="66" viewBox="0 0 66 66" fill="none" stroke="#dcdcdc" strokeWidth="4">
              <circle cx="31" cy="31" r="28" />
              <path d="M50 51L64 64" />
            </svg>
          </IconButton>
        </HeaderRight>
      </Header>

      <Promo>
        <PromoLink href="#margin">想扩大投资，本金不够？试试两融&gt;&gt;</PromoLink>
        <IconButton aria-label="关闭"><Close /></IconButton>
      </Promo>

      <Quote>
        <QuoteMain>
          <Price>38.36</Price>
          <Change><span>-3.62%</span><span>-1.44</span></Change>
          <TradeDate>2025/08/21</TradeDate>
        </QuoteMain>
        {quoteColumns.map((col, n) => (
          <QuoteColumn key={n}>
            {col.map(([label, value, tone]) => (
              <QuoteItem key={label}>
                <QuoteLabel>{label}</QuoteLabel>
                <QuoteValue $tone={tone} $small={label === "盘后额"}>{value}</QuoteValue>
              </QuoteItem>
            ))}
            {n === 2 && <MoreButton>更多</MoreButton>}
          </QuoteColumn>
        ))}
      </Quote>
      <AfterHoursWrap>
        <AfterHours>
          <Pair>盘后固定价格: <PairValue $tone={c.up}>44.38</PairValue></Pair>
          <Pair>量: <PairValue>202</PairValue></Pair>
          <Pair>额: <PairValue>89.65万</PairValue></Pair>
          <SwitchGroup>
            <SwitchLabel>盘后分时<Switch type="checkbox" role="switch" /></SwitchLabel>
            <IconButton aria-label="展开">
              <svg width="34" height="22" viewBox="0 0 34 22" fill="none" stroke="#a0a0a0" strokeWidth="2.500">
                <path d="M2 2L17 19L32 2" />
              </svg>
            </IconButton>
          </SwitchGroup>
        </AfterHours>
      </AfterHoursWrap>

      <Tabs>
        <Tab>分时</Tab>
        <Tab>五日</Tab>
        <Tab $active>日K</Tab>
        <Tab>周K</Tab>
        <Tab>月K</Tab>
        <Tab>更多<Triangle w={17} h={13} /></Tab>
        <SettingsButton aria-label="设置"><Gear /></SettingsButton>
      </Tabs>

      <AverageBar>
        <Pick name="均线" room={34} />
        <AverageGrid>
          {averages.map(([text, tone]) => <Read key={text} text={text} up tone={tone} />)}
        </AverageGrid>
        <BlueButton>DK点<Corner /></BlueButton>
        <BlueButton $wide>不复权</BlueButton>
      </AverageBar>

      <Board>
        <ChartColumn>
          <CandleChart />
          <IndicatorBar>
            <Pick name="成交量" room={41} tri={16} />
            <IndicatorReadings $gap={2}>
              <Read text="25.87万" tone="#ffffff" size={22} />
              <Read text="MA1:39.82万" tone={c.yellow} size={22} />
              <Read text="MA2:34.87万" tone={c.magenta} size={22} />
              <Read text="MA3:29.28万" up tone="#43bd43" size={22} />
            </IndicatorReadings>
            <NextButton aria-label="下一项">
              <svg width="18" height="32" viewBox="0 0 18 32" fill="none" stroke="#fff" strokeWidth="4">
                <path d="M2 2L15 16L2 30" />
              </svg>
            </NextButton>
          </IndicatorBar>
          <VolumeChart />
          <IndicatorBar>
            <Pick name="MACD" room={41} tri={16} />
            <IndicatorReadings $gap={20}>
              <Read text="DIF:1.73" tone="#ffffff" />
              <Read text="DEA:1.27" up tone={c.yellow} />
              <Read text="M:0.93" tone={c.magenta} />
            </IndicatorReadings>
          </IndicatorBar>
          <MacdChart />
          <IndicatorBar>
            <Pick name="KDJ" room={40} tri={16} />
            <IndicatorReadings $gap={28}>
              <Read text="K:65.99" tone="#ffffff" size={41} />
              <Read text="D:68.73" tone={c.yellow} size={41} />
              <Read text="J:60.50" tone={c.magenta} size={41} />
            </IndicatorReadings>
          </IndicatorBar>
          <KdjChart />
          <DateStrip>
            <DayButton>20250821 周四 查看分时 &gt;</DayButton>
            <EndDate>20250923</EndDate>
          </DateStrip>
          <Crosshair />
        </ChartColumn>

        <SideColumn>
          <CostChart />
          <Legend>
            <LegendItem $tone="#16a616">套牢</LegendItem>
            <LegendItem $tone="#cc3030">获利</LegendItem>
          </Legend>
          <CostTable>
            <tbody>
              {[["获利比例:", "55.01%"], ["平均成本:", "36.40"], ["90%成本:", "32.06-41.02"], ["集中度:", "12.26%"]].map(([k, v]) => (
                <tr key={k}>
                  <CostLabel scope="row">{k}</CostLabel>
                  <CostValue>{v}</CostValue>
                </tr>
              ))}
            </tbody>
          </CostTable>
          <Note>
            <NoteButton>
              说明
              <svg width="39" height="39" viewBox="0 0 39 39">
                <rect width="39" height="39" fill="#000" />
                <circle cx="19.500" cy="19.500" r="19" fill="#363637" />
                <circle cx="19.500" cy="11" r="2.500" fill="#fff" />
                <path d="M19.500 17V29" stroke="#fff" strokeWidth="4" strokeLinecap="round" />
              </svg>
            </NoteButton>
            <span>2025-08-21</span>
          </Note>
        </SideColumn>

        <Controls>
          {controls.map(([name, d, gray]) => (
            <RoundButton key={name} $gray={gray} aria-label={name}>
              <svg width="75" height="75" viewBox="-37.500 -37.500 75 75" fill="none" stroke={gray ? "#9a9a9c" : "#3a78c4"} strokeWidth="3">
                <path d={d} />
              </svg>
            </RoundButton>
          ))}
        </Controls>
      </Board>

      <TickerWrap>
        <Ticker>
          <svg width="50" height="42" viewBox="0 0 50 42" fill={c.blue}>
            <path d="M0 13H6V30H0ZM10 14L42 2V0H50V42H44V39L30 33V38H22L16 31L10 29Z" />
          </svg>
          <TickerLink href="#contest">0门槛报名瓜分50万奖池，速戳报名ETF菁英赛&gt;&gt;</TickerLink>
          <TickerDivider />
          <IconButton aria-label="关闭"><Close /></IconButton>
        </Ticker>
      </TickerWrap>

      <Footer>
        <IndexButton>
          <Triangle w={24} h={8} up />
          <IndexValue>46916.66</IndexValue>
          <IndexName>通用设备<IndexChange>-1.66%</IndexChange></IndexName>
        </IndexButton>
        <FooterButton>
          <svg width="70" height="64" viewBox="0 0 70 64" fill="none" stroke={c.label} strokeWidth="3.500">
            <path d="M18 9A28 30 0 0 1 61 47M68 41L61 47V36M52 55A28 30 0 0 1 9 20M2 23L9 17V28" />
            <path d="M24 17L35 31L46 17M35 31V50M23 31H47M23 40H47" strokeWidth="3" />
          </svg>
          交易
        </FooterButton>
        <FooterButton>
          <svg width="60" height="64" viewBox="0 0 60 64" fill="none" stroke={c.label} strokeWidth="3.500">
            <path d="M42 4H9Q2 4 2 11V55Q2 62 9 62H51Q58 62 58 55V20" />
            <path d="M57 3L53 9M50 13L24 41" strokeWidth="7" />
          </svg>
          发帖
        </FooterButton>
        <FooterButton>
          <svg width="58" height="64" viewBox="0 0 58 64" fill="none" stroke={c.label} strokeWidth="3.500" strokeLinejoin="round">
            <rect x="2" y="5" width="24" height="25" rx="5" />
            <rect x="2" y="36" width="24" height="25" rx="5" />
            <rect x="32" y="36" width="24" height="25" rx="5" />
            <path d="M43 4L57 18L43 32L30 18Z" />
          </svg>
          功能
        </FooterButton>
        <FooterButton>
          <svg width="64" height="64" viewBox="0 0 64 64">
            <circle cx="32" cy="33" r="29" fill="none" stroke={c.label} strokeWidth="3" />
            <circle cx="19" cy="33" r="3" fill={c.label} />
            <circle cx="32" cy="33" r="3" fill={c.label} />
            <circle cx="45" cy="33" r="3" fill={c.label} />
          </svg>
          设自选
        </FooterButton>
      </Footer>
    </Page>
  );
}
